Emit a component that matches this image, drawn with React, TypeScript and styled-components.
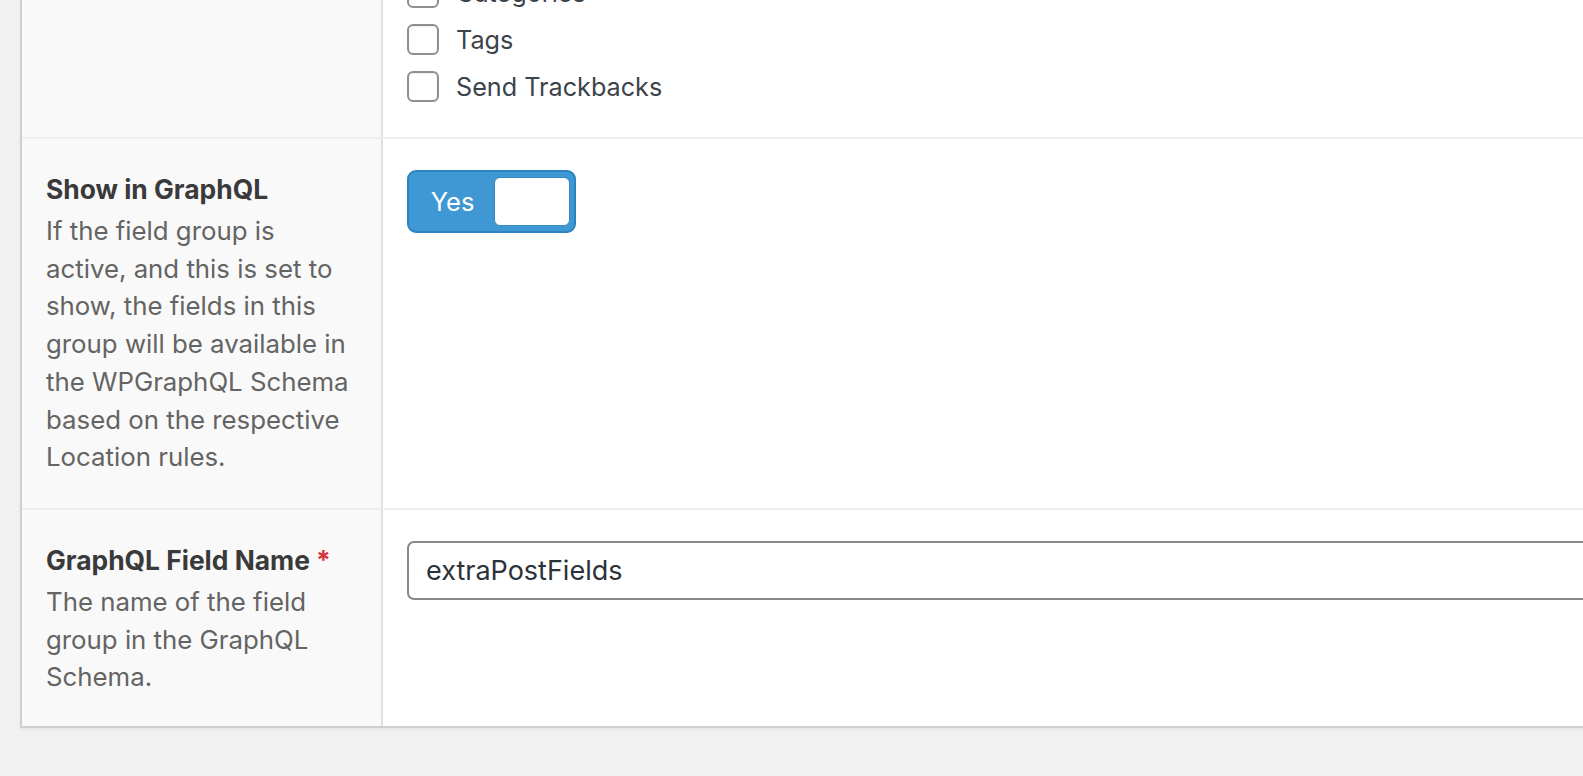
import React from "react";
import styled, { createGlobalStyle } from "styled-components";

const GlobalStyle = createGlobalStyle`
  html, body {
    margin: 0;
    padding: 0;
    background: #f1f1f1;
    overflow: hidden;
  }
  body {
    font-family: Inter, "Noto Sans", sans-serif;
    -webkit-font-smoothing: antialiased;
  }
  * { box-sizing: border-box; }
`;

const Page = styled.div`
  width: 1583px;
  height: 776px;
  overflow: hidden;
  padding-left: 20px;
`;

const Panel = styled.div`
  width: 1800px;
  margin-top: -62px;
  background: #ffffff;
  border-left: 2px solid #ccd0d4;
  border-bottom: 2px solid #ccd0d4;
  box-shadow: 0 2px 2px rgba(0, 0, 0, 0.04);
`;

const Row = styled.div<{ $first?: boolean }>`
  display: grid;
  grid-template-columns: 361px 1fr;
  border-top: ${(p) => (p.$first ? "none" : "2px solid #eeeeee")};
`;

const LabelCell = styled.div<{ $bottom?: number }>`
  background: #f9f9f9;
  border-right: 2px solid #e1e1e1;
  padding: 31px 20px ${(p) => p.$bottom ?? 32}px 24px;
`;

const InputCell = styled.div<{ $bottom?: number }>`
  padding: 31px 24px ${(p) => p.$bottom ?? 32}px 24px;
`;

const FieldTitle = styled.div`
  font-size: 26.4px;
  line-height: 38px;
  font-weight: 700;
  color: #3a3a3a;
  white-space: nowrap;
`;

const Required = styled.span`
  color: #d63638;
  font-weight: 700;
  margin-left: 6px;
`;

const Description = styled.p`
  margin: 4px 0 0;
  font-size: 25.8px;
  line-height: 37.7px;
  color: #646464;
  white-space: nowrap;
`;

const CheckList = styled.ul`
  list-style: none;
  margin: 0;
  padding: 0;
`;

const CheckItem = styled.li`
  display: flex;
  align-items: center;
  gap: 17px;
  height: 47px;
  font-size: 25.2px;
  color: #3c434a;
`;

const CheckBox = styled.span`
  width: 32px;
  height: 31px;
  flex: none;
  border: 2px solid #8c8f94;
  border-radius: 6px;
  background: #ffffff;
  box-shadow: inset 0 1px 2px rgba(0, 0, 0, 0.08);
`;

const Switch = styled.div`
  display: flex;
  align-items: center;
  width: 169px;
  height: 63px;
  padding: 0 4px 0 0;
  background: #3f98d4;
  border: 2px solid #2b83bf;
  border-radius: 9px;
`;

const SwitchText = styled.span`
  flex: 1;
  text-align: center;
  color: #ffffff;
  font-size: 25.5px;
  line-height: 1;
  padding-left: 2px;
`;

const SwitchKnob = styled.span`
  width: 76px;
  height: 49px;
  background: #ffffff;
  border-radius: 6px;
  border: 1px solid #3688c2;
`;

const TextInput = styled.input`
  display: block;
  width: 100%;
  height: 59px;
  margin: 0;
  padding: 0 17px;
  border: 2px solid #85888c;
  border-radius: 7px;
  background: #ffffff;
  font-family: Inter, "Noto Sans", sans-serif;
  font-size: 27px;
  color: #2c3338;
  outline: none;
`;

export default function App() {
  return (
    <>
      <GlobalStyle />
      <Page>
        <Panel>
          <Row $first>
            <LabelCell $bottom={27} />
            <InputCell $bottom={27}>
              <CheckList>
                <CheckItem>
                  <CheckBox />
                  Categories
                </CheckItem>
                <CheckItem>
                  <CheckBox />
                  Tags
                </CheckItem>
                <CheckItem>
                  <CheckBox />
                  Send Trackbacks
                </CheckItem>
              </CheckList>
            </InputCell>
          </Row>
          <Row>
            <LabelCell>
              <FieldTitle>Show in GraphQL</FieldTitle>
              <Description>
                If the field group is
                <br />
                active, and this is set to
                <br />
                show, the fields in this
                <br />
                group will be available in
                <br />
                the WPGraphQL Schema
                <br />
                based on the respective
                <br />
                Location rules.
              </Description>
            </LabelCell>
            <InputCell>
              <Switch>
                <SwitchText>Yes</SwitchText>
                <SwitchKnob />
              </Switch>
            </InputCell>
          </Row>
          <Row>
            <LabelCell $bottom={30}>
              <FieldTitle>
                GraphQL Field Name
                <Required>*</Required>
              </FieldTitle>
              <Description>
                The name of the field
                <br />
                group in the GraphQL
                <br />
                Schema.
              </Description>
            </LabelCell>
            <InputCell $bottom={30}>
              <TextInput defaultValue="extraPostFields" readOnly />
            </InputCell>
          </Row>
        </Panel>
      </Page>
    </>
  );
}
